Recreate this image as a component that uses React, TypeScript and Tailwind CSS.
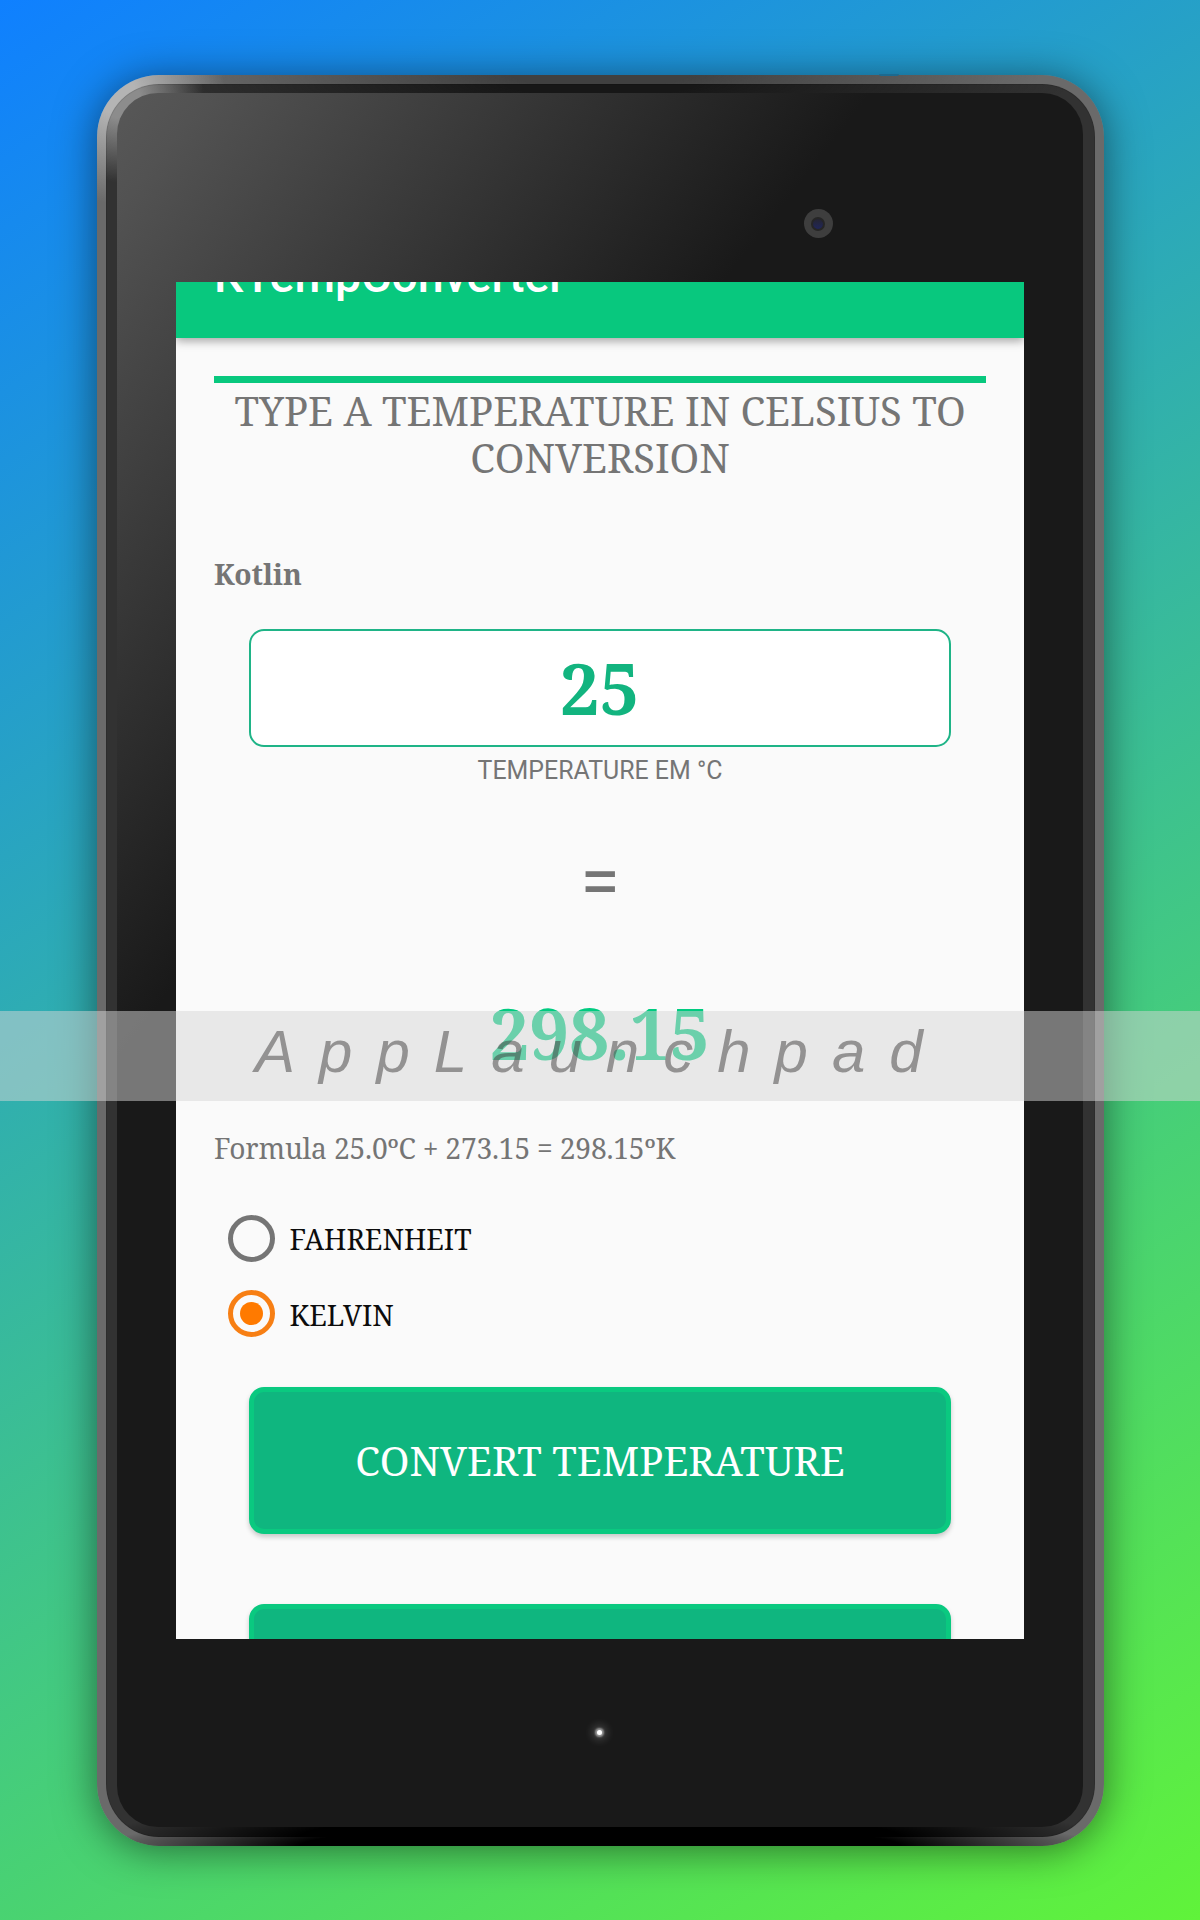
import React from 'react';

const serif = "font-['Noto_Serif','DejaVu_Serif_Condensed',serif]";
const roboto = "font-[Roboto,sans-serif]";

function Radio({ label, checked }: { label: string; checked?: boolean }) {
  return (
    <div className="flex h-[75.5px] items-center pl-[14px]">
      <span
        className={
          checked
            ? 'mt-[1px] flex size-[47px] items-center justify-center rounded-full border-5 border-[#f77f14]'
            : 'mt-[1px] flex size-[47px] items-center justify-center rounded-full border-5 border-[#757575]'
        }
      >
        {checked && <span className="size-[23px] rounded-full bg-[#ff7a00]" />}
      </span>
      <span className="ml-[14.5px] mt-[3px] text-[28.2px] leading-[40px] text-[#0c0c0c]">{label}</span>
    </div>
  );
}

function GreenButton({ label }: { label?: string }) {
  return (
    <div className="mx-[35px] flex h-[147.5px] shrink-0 items-center justify-center rounded-[15px] border-5 border-[#0ac980] bg-[#0fb67f] pt-[2px] text-[40px] leading-[48px] text-white shadow-[0_3px_5px_rgba(0,0,0,0.2)]">
      {label}
    </div>
  );
}

function Screen() {
  return (
    <div className={`relative flex h-[1357px] w-[848px] shrink-0 flex-col overflow-hidden bg-[#fafafa] text-[#757575] ${serif}`}>
      <header className="relative h-[56px] shrink-0 bg-[#08c87e] pl-[38px] shadow-[0_3px_9px_rgba(0,0,0,0.35)]">
        <div className={`mt-[-34.5px] text-[46.5px] font-medium leading-[56px] text-white ${roboto}`}>KTempConverter</div>
      </header>
      <main className="flex flex-col px-[38px] pt-[38px]">
        <div className="h-[7px] bg-[#08c87e]" />
        <h1 className="mt-[4px] text-center text-[40px] leading-[47px]">
          TYPE A TEMPERATURE IN CELSIUS TO
          <br />
          CONVERSION
        </h1>
        <div className="mt-[73px] text-[28.3px] font-bold leading-[40px]">Kotlin</div>
        <div className="mx-[35px] mt-[35px] flex h-[117.5px] items-center justify-center rounded-[15px] border-2 border-[#1fb487] bg-white text-[70.3px] font-bold leading-[96px] text-[#12b47f]">
          <span className="-ml-[1px]">25</span>
        </div>
        <div className={`mt-[10.5px] text-center text-[24.9px] leading-[28px] ${roboto}`}>TEMPERATURE EM °C</div>
        <div className={`mt-[57px] text-center text-[72px] leading-[80px] ${roboto}`}>=</div>
        <div className="mt-[62.5px] -ml-[1px] text-center text-[70.6px] font-bold leading-[96px] text-[#00cb80]">298.15</div>
        <div className="mt-[47px] text-[28.2px] leading-[40px] tracking-[-0.2px]">Formula 25.0ºC + 273.15 = 298.15ºK</div>
        <div className="mt-[32.5px]">
          <Radio label="FAHRENHEIT" />
          <Radio label="KELVIN" checked />
        </div>
        <div className="mt-[35.5px] flex flex-col gap-[70px]">
          <GreenButton label="CONVERT TEMPERATURE" />
          <GreenButton />
        </div>
      </main>
    </div>
  );
}

function Tablet() {
  return (
    <div className="relative h-[1771.5px] w-[1007px] rounded-[62px] bg-[radial-gradient(circle_at_18px_18px,#b4b4b4_20px,transparent_110px),radial-gradient(ellipse_500px_34px_at_50%_100%,#000_60%,transparent),radial-gradient(ellipse_440px_60px_at_50%_0%,#404040_20%,transparent),linear-gradient(#6a6a6a,#6a6a6a)] p-[9px] shadow-[0_4px_42px_rgba(0,0,0,0.5)]">
      <div className="h-full rounded-[53px] bg-[radial-gradient(circle_at_14px_14px,#8c8c8c_20px,transparent_84px),radial-gradient(ellipse_500px_40px_at_50%_100%,#000_60%,transparent),radial-gradient(ellipse_470px_60px_at_50%_0%,#171717_20%,transparent),linear-gradient(#323232,#323232)] pb-[10px] pl-[11px] pr-[12px] pt-[9.5px] shadow-[inset_0_0_0_1px_rgba(0,0,0,0.1)]">
        <div className="flex h-full flex-col items-center rounded-[41px] bg-[linear-gradient(128deg,#585858_0%,#525252_4%,#191919_32.5%)] pl-[1px]">
          <div className="flex h-[189px] w-full items-start pt-[116px]">
            <div className="ml-[686px] flex size-[29px] items-center justify-center rounded-full bg-[#3e3e3e]">
              <div className="size-[14px] rounded-full border-2 border-[#262626] bg-[linear-gradient(#252531,#20265a)]" />
            </div>
          </div>
          <Screen />
          <div className="-ml-[1px] mt-[91px] size-[5px] rounded-full bg-white shadow-[0_0_2px_2px_rgba(255,255,255,0.5),0_0_8px_5px_rgba(255,255,255,0.18)]" />
        </div>
      </div>
      <div className="absolute left-[782px] top-[-1px] h-[2px] w-[20px] rounded-b-full bg-[#1c6a90]" />
    </div>
  );
}

export default function App() {
  return (
    <div className="relative flex h-[1920px] w-[1200px] items-start justify-center overflow-hidden bg-[linear-gradient(148deg,#0f80ff_0%,#60f33a_100%)] pt-[74.5px]">
      <Tablet />
      <div className="absolute left-0 top-[1011px] h-[90px] w-full whitespace-pre bg-[rgba(213,213,213,0.5)] pl-[255px] font-['Liberation_Sans',sans-serif] text-[60px] italic leading-[82px] tracking-[24px] text-[rgba(61,59,60,0.5)]">
        AppLaunchpad
      </div>
    </div>
  );
}
